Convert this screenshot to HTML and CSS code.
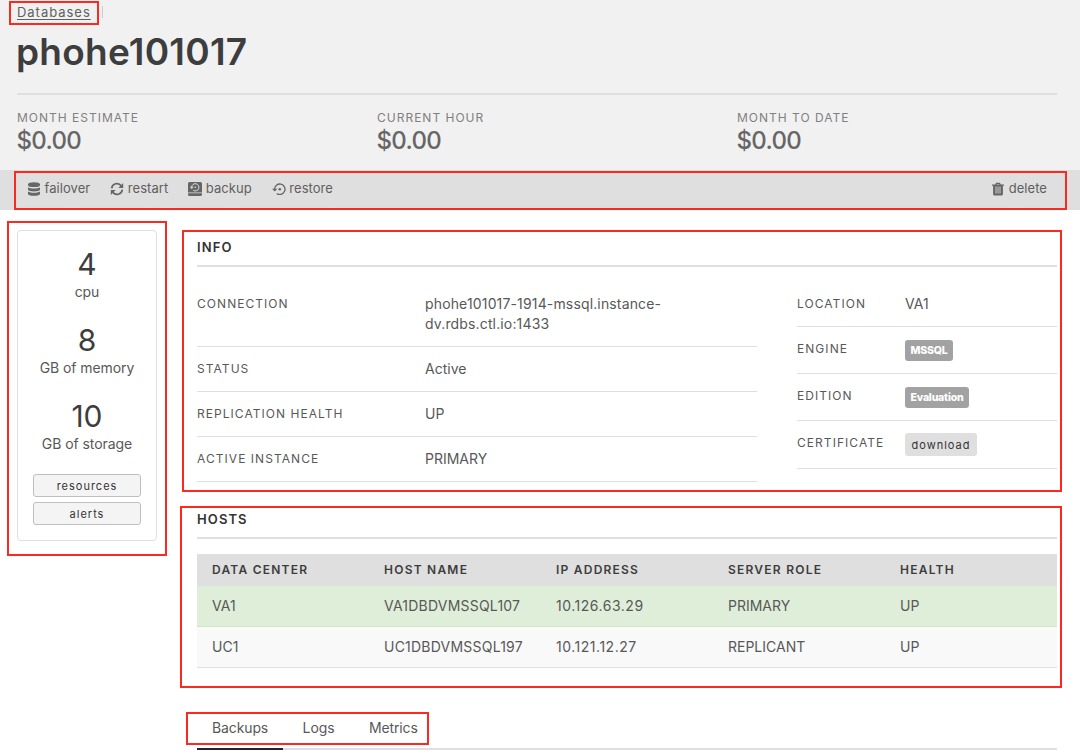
FILE: index.html
```html
<!DOCTYPE html>
<html lang="en">
<head>
<meta charset="utf-8">
<title>phohe101017</title>
<link rel="stylesheet" href="styles.css">
</head>
<body>
<header class="masthead">
  <nav class="crumbs"><a class="crumb-link" href="#">Databases</a><span class="crumb-sep"></span></nav>
  <h1 class="title">phohe101017</h1>
  <div class="costs">
    <div><div class="cost-label">MONTH ESTIMATE</div><div class="cost-value">$0.00</div></div>
    <div><div class="cost-label">CURRENT HOUR</div><div class="cost-value">$0.00</div></div>
    <div><div class="cost-label">MONTH TO DATE</div><div class="cost-value">$0.00</div></div>
  </div>
</header>
<div class="toolbar">
  <a class="action failover"><svg class="icon" viewBox="0 0 14 14"><path d="M1 2.200C1 .9 3.500.2 7 .2s6 .7 6 2v1C13 4.500 10.500 5.100 7 5.100S1 4.500 1 3.200zM1 5.200c1.300 1 3.600 1.300 6 1.300s4.700-.3 6-1.300v2.200c0 1.300-2.500 2-6 2s-6-.7-6-2zM1 9.500c1.300 1 3.600 1.300 6 1.300s4.700-.3 6-1.300v2.200c0 1.400-2.500 2.100-6 2.100s-6-.7-6-2.100z"/></svg>failover</a>
  <a class="action restart"><svg class="icon" viewBox="0 0 14 14"><path class="line" d="M1.700 6.300A5.300 5.300 0 0 1 11.200 3.700M12.300 7.700A5.300 5.300 0 0 1 2.800 10.300"/><path d="M13.200 1v5.100H8.300zM.8 13V7.900h4.900z"/></svg>restart</a>
  <a class="action backup"><svg class="icon" viewBox="0 0 14 14"><path d="M1.500 0h11Q14 0 14 1.500V10.400H0V1.500Q0 0 1.500 0zM0 11.200h14v1.300Q14 14 12.500 14h-11Q0 14 0 12.500z"/><path class="cut" d="M3.700 5.200A3.600 3.600 0 1 1 5.300 8.300"/><path class="cut-dot" d="M1.900 4.800h3.700L3.700 7z"/><circle class="cut-dot" cx="7.300" cy="5.200" r=".8"/></svg>backup</a>
  <a class="action restore"><svg class="icon" viewBox="0 0 14 14"><path class="thin" d="M2.600 7.300A5.200 5.200 0 1 1 4.700 11.400"/><path d="M0 6.700h5.400L2.700 9.600z"/><circle cx="7.800" cy="7.200" r="1.300"/></svg>restore</a>
  <a class="action delete"><svg class="icon" viewBox="0 0 14 14"><path class="thin" d="M4.700 2.800 5.500 1.300h3l.8 1.500M1 3.100h12"/><path d="M2.100 3h9.800v9.200q0 1.300-1.300 1.300H3.400q-1.300 0-1.300-1.300z"/><path class="slots" d="M4 4.500h6v7H4z"/></svg>delete</a>
</div>
<main class="page">
  <aside class="specs">
    <div class="spec"><b>4</b><span>cpu</span></div>
    <div class="spec"><b>8</b><span>GB of memory</span></div>
    <div class="spec"><b>10</b><span>GB of storage</span></div>
    <button class="btn">resources</button>
    <button class="btn">alerts</button>
  </aside>
  <div class="content">
    <section>
      <h2 class="heading">INFO</h2>
      <div class="info">
        <dl class="facts wide">
          <div class="fact first"><dt>CONNECTION</dt><dd class="address">phohe101017-1914-mssql.instance-<br>dv.rdbs.ctl.io:1433</dd></div>
          <div class="fact"><dt>STATUS</dt><dd>Active</dd></div>
          <div class="fact"><dt>REPLICATION HEALTH</dt><dd>UP</dd></div>
          <div class="fact"><dt>ACTIVE INSTANCE</dt><dd>PRIMARY</dd></div>
        </dl>
        <dl class="facts narrow">
          <div class="fact"><dt>LOCATION</dt><dd>VA1</dd></div>
          <div class="fact tall"><dt>ENGINE</dt><dd><span class="badge mssql">MSSQL</span></dd></div>
          <div class="fact tall"><dt>EDITION</dt><dd><span class="badge eval">Evaluation</span></dd></div>
          <div class="fact cert"><dt>CERTIFICATE</dt><dd><span class="download">download</span></dd></div>
        </dl>
      </div>
    </section>
    <section class="hosts">
      <h2 class="heading">HOSTS</h2>
      <table class="table">
        <thead><tr><th>DATA CENTER</th><th>HOST NAME</th><th>IP ADDRESS</th><th>SERVER ROLE</th><th>HEALTH</th></tr></thead>
        <tbody>
          <tr class="primary"><td>VA1</td><td class="host">VA1DBDVMSSQL107</td><td class="ip">10.126.63.29</td><td>PRIMARY</td><td>UP</td></tr>
          <tr><td>UC1</td><td class="host">UC1DBDVMSSQL197</td><td class="ip">10.121.12.27</td><td>REPLICANT</td><td>UP</td></tr>
        </tbody>
      </table>
    </section>
    <nav class="tabs"><a class="tab active">Backups</a><a class="tab">Logs</a><a class="tab">Metrics</a></nav>
  </div>
</main>
<div class="mark mark-crumb"></div>
<div class="mark mark-toolbar"></div>
<div class="mark mark-specs"></div>
<div class="mark mark-info"></div>
<div class="mark mark-hosts"></div>
<div class="mark mark-tabs"></div>
</body>
</html>
```
FILE: styles.css
```css
* { box-sizing: border-box; }
body {
  margin: 0;
  height: 755px;
  overflow: hidden;
  position: relative;
  background: #fff;
  color: #585858;
  font: 425 14px/20px Inter, "Liberation Sans", sans-serif;
}
h1, h2, dl, dd { margin: 0; }

.masthead { height: 170px; padding: 2px 23px 0 17px; background: #f1f1f1; }
.crumbs { display: flex; gap: 11px; height: 20px; align-items: center; }
.crumb-link { color: #606060; font-size: 13px; letter-spacing: .97px; text-decoration: underline; text-underline-offset: 2px; }
.crumb-sep { width: 1px; height: 12px; background: #ccc; }
.title { height: 73px; padding-top: 7px; border-bottom: 2px solid #dfdfdf; color: #3d3d3d; font-size: 37px; line-height: 46px; font-weight: 600; letter-spacing: .25px; text-indent: -1px; }
.costs { display: grid; grid-template-columns: repeat(3, 360px); padding-top: 14px; }
.cost-label { color: #808080; font-size: 12px; line-height: 18px; letter-spacing: 1px; }
.cost-value { font-size: 24px; line-height: 28px; font-weight: 450; letter-spacing: -.7px; text-indent: -.5px; color: #666; }

.toolbar { display: flex; height: 40px; padding: 0 33px 4px 27px; align-items: center; background: #dfdfdf; }
.action { display: flex; align-items: center; gap: 3.500px; font-size: 13px; line-height: 20px; margin-right: 20px; color: #606060; letter-spacing: .06px; }
.delete { margin: 0 0 0 auto; }
.icon { width: 14px; height: 14px; fill: #666; position: relative; top: 1px; }
.line { fill: none; stroke: #666; stroke-width: 1.700; }
.thin { fill: none; stroke: #666; stroke-width: 1.300; }
.cut { fill: none; stroke: #dfdfdf; stroke-width: 1; }
.cut-dot { fill: #dfdfdf; }
.slots { fill: #999; }

.page { display: flex; align-items: flex-start; gap: 40px; padding: 20px 23px 0 17px; }
.specs { width: 140px; height: 311px; padding: 15px 15px 0; border: 1px solid #dfdfdf; border-radius: 4px; text-align: center; }
.spec { height: 76px; }
.spec b { display: block; color: #3d3d3d; font-size: 30px; line-height: 36px; font-weight: 430; }
.spec span { display: block; line-height: 20px; letter-spacing: -.07px; }
.btn { display: block; width: 108px; height: 23px; margin: 0 0 5px; padding: 1px 0 0; border: 1px solid #bfbfbf; border-radius: 3px; background: #f4f4f4; color: #333; font: 425 11px/20px Inter, sans-serif; letter-spacing: 1px; }

.content { width: 860px; }
.heading { height: 37px; padding-top: 7px; border-bottom: 2px solid #dfdfdf; color: #333; font-size: 13px; line-height: 20px; font-weight: 600; letter-spacing: 1.100px; }
.info { display: flex; height: 235px; gap: 40px; padding-top: 15px; align-items: flex-start; }
.wide { width: 560px; }
.narrow { width: 260px; }
.fact { display: flex; height: 45px; padding-top: 12px; border-bottom: 1px solid #dfdfdf; }
.first { height: 65px; }
.tall { height: 47px; }
.cert { height: 48px; }
.fact dt { width: 228px; font-size: 12px; letter-spacing: 1.050px; }
.narrow dt { width: 108px; }
.address { letter-spacing: .15px; }
.badge { display: flex; height: 21px; margin-top: 1px; align-items: center; justify-content: center; border-radius: 3px; background: #a2a2a2; color: #fff; font-size: 10.500px; font-weight: 800; letter-spacing: -.2px; }
.mssql { width: 48px; }
.eval { width: 64px; }
.download { display: flex; width: 72px; height: 23px; padding-top: 1px; align-items: center; justify-content: center; border-radius: 3px; background: #dfdfdf; color: #333; font-size: 11px; letter-spacing: 1px; }

.table { width: 860px; margin-top: 15px; table-layout: fixed; border-collapse: separate; border-spacing: 0; }
.table th { height: 32px; padding: 0 15px; background: #dfdfdf; color: #3d3d3d; font-size: 12px; font-weight: 600; letter-spacing: 1.230px; text-align: left; }
.table td { height: 41px; padding: 0 15px; background: #f9f9f9; border-bottom: 1px solid #dfdfdf; }
.table .primary td { background: #dfeed9; border-color: #d3e5c8; }
.table .host { letter-spacing: .22px; }
.table .ip { letter-spacing: .52px; }
.tabs { display: flex; height: 41px; margin-top: 41px; border-bottom: 2px solid #dfdfdf; }
.tab { height: 41px; padding: 9px 15px 0; margin-right: 4.500px; letter-spacing: -.12px; }
.active { border-bottom: 2px solid #222; }

/* Highlight boxes over the annotated regions */
.mark { position: absolute; border: 2px solid #fa2a20; }
.mark-crumb { left: 9px; top: 1px; width: 90px; height: 24px; }
.mark-toolbar { left: 14px; top: 171px; width: 1053px; height: 39px; }
.mark-specs { left: 7px; top: 221px; width: 160px; height: 335px; }
.mark-info { left: 182px; top: 230px; width: 880px; height: 262px; }
.mark-hosts { left: 180px; top: 506px; width: 882px; height: 182px; }
.mark-tabs { left: 186px; top: 712px; width: 243px; height: 33px; }
```
